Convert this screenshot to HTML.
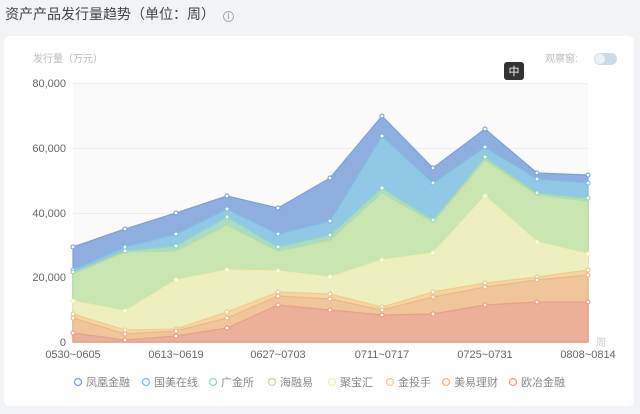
<!DOCTYPE html>
<html><head><meta charset="utf-8"><style>
body{margin:0;width:640px;height:414px;background:#f2f3f7;font-family:"Liberation Sans","Noto Sans CJK SC",sans-serif;overflow:hidden;position:relative}
.t{position:absolute;left:5px;top:4px;font-size:14px;color:#444}
.card{position:absolute;left:4px;top:36px;width:630px;height:370px;background:#fff;border-radius:6px}
</style></head><body>
<div class="t">资产产品发行量趋势（单位：周） <span style="font-size:10px;color:#999;display:inline-block;width:9px;height:9px;border:1px solid #aaa;border-radius:50%;line-height:9px;text-align:center;margin-left:4px">i</span></div>
<div class="card"></div>
<svg width="640" height="414" style="position:absolute;left:0;top:0" font-family="Liberation Sans, Noto Sans CJK SC, sans-serif">
<rect x="73" y="83" width="515" height="259" fill="#fafafa"/>
<g stroke="#eee" stroke-width="1"><line x1="73" y1="83.5" x2="588" y2="83.5"/><line x1="73" y1="148.5" x2="588" y2="148.5"/><line x1="73" y1="213.5" x2="588" y2="213.5"/><line x1="73" y1="277.5" x2="588" y2="277.5"/></g>
<text x="33" y="62" font-size="10" fill="#bbb">发行量（万元）</text>
<g font-size="11" fill="#666" text-anchor="end"><text x="66" y="87">80,000</text><text x="66" y="152">60,000</text><text x="66" y="217">40,000</text><text x="66" y="281">20,000</text><text x="66" y="346">0</text></g>
<g stroke-linejoin="round" stroke-width="1.2">
<polygon fill="#8eaee0" stroke="#7f9fd8" points="73,247 125,229 176,213 227,196 278,208 330,178 382,116 433,168 485,129 537,173 588,175 588,342 73,342"/>
<polygon fill="#90c8e6" stroke="#80bde0" points="73,270 125,247 176,234 227,209 278,234 330,221 382,136 433,183 485,147 537,179 588,183 588,342 73,342"/>
<polygon fill="#a8dcc8" stroke="#96d4bd" points="73,272 125,251 176,246 227,217 278,247 330,235 382,188 433,220 485,157 537,193 588,198 588,342 73,342"/>
<polygon fill="#c9e5b2" stroke="#b8dca0" points="73,274 125,252 176,251 227,225 278,251 330,240 382,193 433,222 485,160 537,195 588,201 588,342 73,342"/>
<polygon fill="#eeefbe" stroke="#eeeeb0" points="73,301 125,311 176,280 227,270 278,271 330,277 382,260 433,253 485,196 537,242 588,254 588,342 73,342"/>
<polygon fill="#f3d6a2" stroke="#f0cc90" points="73,314 125,330 176,329 227,312 278,292 330,294 382,307 433,292 485,283 537,277 588,270 588,342 73,342"/>
<polygon fill="#f0c59a" stroke="#ecb888" points="73,318 125,334 176,331 227,318 278,296 330,299 382,310 433,297 485,287 537,280 588,275 588,342 73,342"/>
<polygon fill="#ebb097" stroke="#e8a088" points="73,333 125,340 176,336 227,328 278,305 330,310 382,315 433,314 485,305 537,302 588,302 588,342 73,342"/>
</g>
<g fill="#fff" stroke-width="1">
<g stroke="#7096d6"><circle cx="73" cy="247" r="2"/><circle cx="125" cy="229" r="2"/><circle cx="176" cy="213" r="2"/><circle cx="227" cy="196" r="2"/><circle cx="278" cy="208" r="2"/><circle cx="330" cy="178" r="2"/><circle cx="382" cy="116" r="2"/><circle cx="433" cy="168" r="2"/><circle cx="485" cy="129" r="2"/><circle cx="537" cy="173" r="2"/><circle cx="588" cy="175" r="2"/></g>
<g stroke="#72b6df"><circle cx="73" cy="270" r="2"/><circle cx="125" cy="247" r="2"/><circle cx="176" cy="234" r="2"/><circle cx="227" cy="209" r="2"/><circle cx="278" cy="234" r="2"/><circle cx="330" cy="221" r="2"/><circle cx="382" cy="136" r="2"/><circle cx="433" cy="183" r="2"/><circle cx="485" cy="147" r="2"/><circle cx="537" cy="179" r="2"/><circle cx="588" cy="183" r="2"/></g>
<g stroke="#88cfb4"><circle cx="73" cy="272" r="2"/><circle cx="125" cy="251" r="2"/><circle cx="176" cy="246" r="2"/><circle cx="227" cy="217" r="2"/><circle cx="278" cy="247" r="2"/><circle cx="330" cy="235" r="2"/><circle cx="382" cy="188" r="2"/><circle cx="433" cy="220" r="2"/><circle cx="485" cy="157" r="2"/><circle cx="537" cy="193" r="2"/><circle cx="588" cy="198" r="2"/></g>
<g stroke="#eeeeb0"><circle cx="73" cy="301" r="2"/><circle cx="125" cy="311" r="2"/><circle cx="176" cy="280" r="2"/><circle cx="227" cy="270" r="2"/><circle cx="278" cy="271" r="2"/><circle cx="330" cy="277" r="2"/><circle cx="382" cy="260" r="2"/><circle cx="433" cy="253" r="2"/><circle cx="485" cy="196" r="2"/><circle cx="537" cy="242" r="2"/><circle cx="588" cy="254" r="2"/></g>
<g stroke="#eec080"><circle cx="73" cy="314" r="2"/><circle cx="125" cy="330" r="2"/><circle cx="176" cy="329" r="2"/><circle cx="227" cy="312" r="2"/><circle cx="278" cy="292" r="2"/><circle cx="330" cy="294" r="2"/><circle cx="382" cy="307" r="2"/><circle cx="433" cy="292" r="2"/><circle cx="485" cy="283" r="2"/><circle cx="537" cy="277" r="2"/><circle cx="588" cy="270" r="2"/></g>
<g stroke="#e8ac7a"><circle cx="73" cy="318" r="2"/><circle cx="125" cy="334" r="2"/><circle cx="176" cy="331" r="2"/><circle cx="227" cy="318" r="2"/><circle cx="278" cy="296" r="2"/><circle cx="330" cy="299" r="2"/><circle cx="382" cy="310" r="2"/><circle cx="433" cy="297" r="2"/><circle cx="485" cy="287" r="2"/><circle cx="537" cy="280" r="2"/><circle cx="588" cy="275" r="2"/></g>
<g stroke="#e49078"><circle cx="73" cy="333" r="2"/><circle cx="125" cy="340" r="2"/><circle cx="176" cy="336" r="2"/><circle cx="227" cy="328" r="2"/><circle cx="278" cy="305" r="2"/><circle cx="330" cy="310" r="2"/><circle cx="382" cy="315" r="2"/><circle cx="433" cy="314" r="2"/><circle cx="485" cy="305" r="2"/><circle cx="537" cy="302" r="2"/><circle cx="588" cy="302" r="2"/></g>
</g>
<g font-size="11" fill="#666" text-anchor="middle"><text x="73" y="358">0530~0605</text><text x="176" y="358">0613~0619</text><text x="278" y="358">0627~0703</text><text x="382" y="358">0711~0717</text><text x="485" y="358">0725~0731</text><text x="588" y="358">0808~0814</text></g>
<text x="596" y="346" font-size="10" fill="#ccc">周</text>
<text x="545" y="62" font-size="10" fill="#bbb">观察窗:</text>
<rect x="594" y="53" width="23" height="12" rx="6" fill="#ccdbe8"/><circle cx="600" cy="59" r="5" fill="#eef2f6"/>
<rect x="504" y="62" width="20" height="18" rx="3" fill="#333"/><text x="514" y="75" font-size="11" fill="#fff" text-anchor="middle">中</text>
<g font-size="11" fill="#888">
<circle cx="78" cy="382" r="3.5" fill="none" stroke="#7f9fd8" stroke-width="1.3"/><text x="86" y="386">凤凰金融</text>
<circle cx="146" cy="382" r="3.5" fill="none" stroke="#80bde0" stroke-width="1.3"/><text x="154" y="386">国美在线</text>
<circle cx="213" cy="382" r="3.5" fill="none" stroke="#96d4bd" stroke-width="1.3"/><text x="221" y="386">广金所</text>
<circle cx="272" cy="382" r="3.5" fill="none" stroke="#b8dca0" stroke-width="1.3"/><text x="280" y="386">海融易</text>
<circle cx="332" cy="382" r="3.5" fill="none" stroke="#eeeeb0" stroke-width="1.3"/><text x="340" y="386">聚宝汇</text>
<circle cx="390" cy="382" r="3.5" fill="none" stroke="#f0cc90" stroke-width="1.3"/><text x="398" y="386">金投手</text>
<circle cx="446" cy="382" r="3.5" fill="none" stroke="#ecb888" stroke-width="1.3"/><text x="454" y="386">美易理财</text>
<circle cx="513" cy="382" r="3.5" fill="none" stroke="#e8a088" stroke-width="1.3"/><text x="521" y="386">欧冶金融</text>
</g>
</svg>
</body></html>
